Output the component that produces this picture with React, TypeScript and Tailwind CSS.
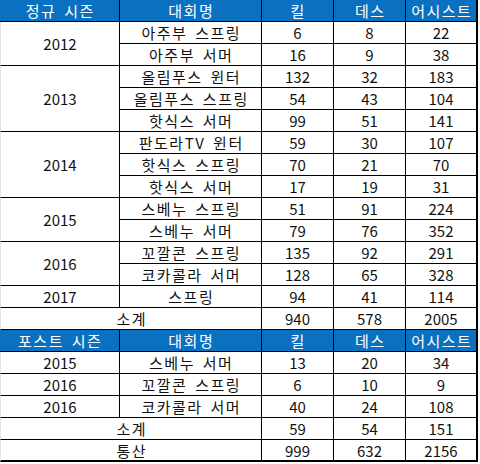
import React from 'react';

type Row = { year?: string; span?: number; name: string; k: number; d: number; a: number };

const regular: Row[] = [
  { year: '2012', span: 2, name: '아주부 스프링', k: 6, d: 8, a: 22 },
  { name: '아주부 서머', k: 16, d: 9, a: 38 },
  { year: '2013', span: 3, name: '올림푸스 윈터', k: 132, d: 32, a: 183 },
  { name: '올림푸스 스프링', k: 54, d: 43, a: 104 },
  { name: '핫식스 서머', k: 99, d: 51, a: 141 },
  { year: '2014', span: 3, name: '판도라TV 윈터', k: 59, d: 30, a: 107 },
  { name: '핫식스 스프링', k: 70, d: 21, a: 70 },
  { name: '핫식스 서머', k: 17, d: 19, a: 31 },
  { year: '2015', span: 2, name: '스베누 스프링', k: 51, d: 91, a: 224 },
  { name: '스베누 서머', k: 79, d: 76, a: 352 },
  { year: '2016', span: 2, name: '꼬깔콘 스프링', k: 135, d: 92, a: 291 },
  { name: '코카콜라 서머', k: 128, d: 65, a: 328 },
  { year: '2017', span: 1, name: '스프링', k: 94, d: 41, a: 114 },
];

const post: Row[] = [
  { year: '2015', span: 1, name: '스베누 서머', k: 13, d: 20, a: 34 },
  { year: '2016', span: 1, name: '꼬깔콘 스프링', k: 6, d: 10, a: 9 },
  { year: '2016', span: 1, name: '코카콜라 서머', k: 40, d: 24, a: 108 },
];

const cell = 'flex items-center justify-center border-b border-black leading-none';
const body = `${cell} bg-white text-[#111]`;
const head = `${cell} bg-[#0a70c0] text-white`;
// korean text in the sheet is set wider than noto
const ko = 'tracking-[1.5px] [word-spacing:3px] pl-[1.5px]';

const spanClass: Record<number, string> = { 1: 'row-span-1', 2: 'row-span-2', 3: 'row-span-3' };

const Header: React.FC<{ title: string }> = ({ title }) => (
  <>
    <div className={`${head} ${ko} border-r`}>{title}</div>
    <div className={`${head} ${ko} border-r`}>대회명</div>
    <div className={`${head} ${ko} border-r`}>킬</div>
    <div className={`${head} ${ko} border-r`}>데스</div>
    <div className={`${head} ${ko} border-r-2`}>어시스트</div>
  </>
);

const Stats: React.FC<{ k: number; d: number; a: number; last?: boolean }> = ({ k, d, a, last }) => (
  <>
    <div className={`${body} border-r ${last ? 'border-b-2' : ''}`}>{k}</div>
    <div className={`${body} border-r ${last ? 'border-b-2' : ''}`}>{d}</div>
    <div className={`${body} border-r-2 ${last ? 'border-b-2' : ''}`}>{a}</div>
  </>
);

const Rows: React.FC<{ rows: Row[] }> = ({ rows }) => (
  <>
    {rows.map((r, i) => (
      <React.Fragment key={i}>
        {r.year && (
          <div className={`${body} border-r border-l border-l-[#dfe3e8] ${spanClass[r.span || 1]}`}>{r.year}</div>
        )}
        <div className={`${body} ${ko} border-r`}>{r.name}</div>
        <Stats k={r.k} d={r.d} a={r.a} />
      </React.Fragment>
    ))}
  </>
);

export default function App() {
  return (
    <div
      className="w-[480px] h-[464px] bg-white text-[15px]"
      style={{ fontFamily: '"Noto Sans CJK KR", "Noto Sans", sans-serif' }}
    >
      <div className="grid w-[478px] grid-cols-[120px_142px_72px_72px_72px] auto-rows-[22px]">
        <Header title="정규 시즌" />
        <Rows rows={regular} />
        <div className={`${body} ${ko} col-span-2 border-r border-l border-l-[#dfe3e8]`}>소계</div>
        <Stats k={940} d={578} a={2005} />
        <Header title="포스트 시즌" />
        <Rows rows={post} />
        <div className={`${body} ${ko} col-span-2 border-r border-l border-l-[#dfe3e8]`}>소계</div>
        <Stats k={59} d={54} a={151} />
        <div className={`${body} ${ko} col-span-2 border-r border-l border-l-[#dfe3e8] border-b-2`}>통산</div>
        <Stats k={999} d={632} a={2156} last />
      </div>
    </div>
  );
}
